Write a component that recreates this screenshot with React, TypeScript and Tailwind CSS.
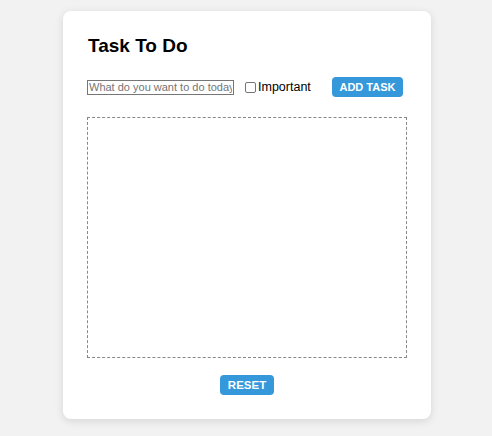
import React from "react";

export default function App() {
  return (
    <div
      className="min-h-[436px] w-full bg-[#f2f2f2] pt-[11px]"
      style={{ fontFamily: '"Liberation Sans", Arial, sans-serif' }}
    >
      <div className="ml-[63px] flex w-[368px] flex-col rounded-[8px] bg-white p-[24px] shadow-[0_2px_8px_rgba(0,0,0,0.12)]">
        <h3 className="pl-[1px] text-[19px] font-bold leading-[21px] text-black">Task To Do</h3>
        <div className="mt-[21px] flex h-[20px] items-center">
          <input
            type="text"
            placeholder="What do you want to do today?"
            className="h-[15px] w-[147px] border border-[#767676] px-[1px] text-[11px] leading-[13px] text-black outline-none placeholder:text-[#757575]"
          />
          <span className="ml-[11px] h-[11px] w-[11px] rounded-[2px] border border-[#767676] bg-white" />
          <span className="ml-[2px] text-[12.5px] leading-[15px] text-black">Important</span>
          <button className="ml-auto mr-[4px] h-[20px] w-[71px] rounded-[4px] bg-[#3498db] text-[11px] font-bold leading-[20px] text-white">
            ADD TASK
          </button>
        </div>
        <div className="mt-[20px] h-[241px] w-[320px] border border-dashed border-[#888]" />
        <div className="mt-[17px] flex justify-center">
          <button className="h-[20px] w-[54px] rounded-[4px] bg-[#3498db] text-[11.5px] font-bold leading-[20px] text-white">
            RESET
          </button>
        </div>
      </div>
    </div>
  );
}
